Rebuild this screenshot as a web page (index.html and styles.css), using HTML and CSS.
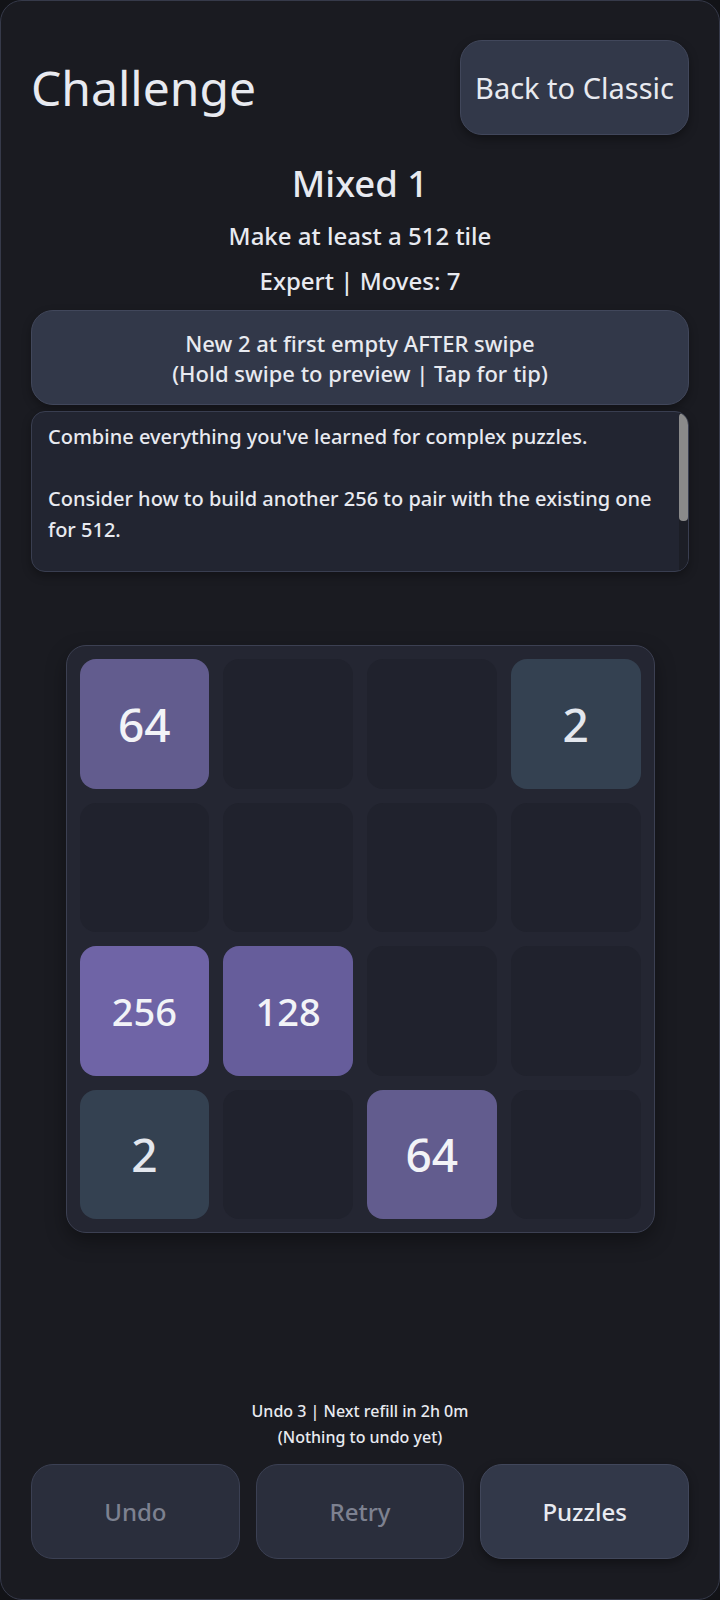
FILE: index.html
```html
<!DOCTYPE html>
<html lang="en">
<head>
    <meta charset="UTF-8">
    <meta name="viewport" content="width=device-width, initial-scale=1.0">
    <title>Challenge</title>
    <link rel="stylesheet" href="styles.css">
</head>
<body>

    <div class="app">
        <!-- Header -->
        <header class="top-bar">
            <h1>Challenge</h1>
            <button class="btn btn-back">Back to Classic</button>
        </header>

        <!-- Level info -->
        <section class="level-info">
            <h2>Mixed 1</h2>
            <p class="goal">Make at least a 512 tile</p>
            <p class="meta">Expert | Moves: 7</p>
        </section>

        <button class="rule-box">New 2 at first empty AFTER swipe<br>(Hold swipe to preview | Tap for tip)</button>

        <div class="notes-wrap">
            <div class="notes">
                <div class="notes-text">Combine everything you've learned for complex puzzles.

Consider how to build another 256 to pair with the existing one for 512.</div>
            </div>
            <div class="scrollbar"><div class="scroll-thumb"></div></div>
        </div>

        <!-- Board -->
        <div class="board">
            <div class="tile t64">64</div>
            <div class="tile"></div>
            <div class="tile"></div>
            <div class="tile t2">2</div>

            <div class="tile"></div>
            <div class="tile"></div>
            <div class="tile"></div>
            <div class="tile"></div>

            <div class="tile t256 small">256</div>
            <div class="tile t128 small">128</div>
            <div class="tile"></div>
            <div class="tile"></div>

            <div class="tile t2">2</div>
            <div class="tile"></div>
            <div class="tile t64">64</div>
            <div class="tile"></div>
        </div>

        <div class="spacer"></div>

        <!-- Footer -->
        <div class="undo-status">
            <p>Undo 3 | Next refill in 2h 0m</p>
            <p>(Nothing to undo yet)</p>
        </div>

        <div class="actions">
            <button class="btn btn-action" disabled>Undo</button>
            <button class="btn btn-action" disabled>Retry</button>
            <button class="btn btn-action btn-primary">Puzzles</button>
        </div>
    </div>

</body>
</html>
```

FILE: styles.css
```css
:root {
    --page: #121317;
    --card: #1a1b21;
    --card-border: #363a4a;
    --panel: #323849;
    --panel-border: #41475b;
    --panel-dark: #222531;
    --text: #e8eaf0;
    --muted: #7d8190;
    --empty: #20222d;
}

* {
    margin: 0;
    padding: 0;
    box-sizing: border-box;
}

body {
    background: var(--page);
    font-family: "Noto Sans", "Open Sans", sans-serif;
    color: var(--text);
}

.app {
    width: 720px;
    height: 1600px;
    background: var(--card);
    border: 1px solid var(--card-border);
    border-radius: 22px;
    padding: 39px 30px 40px;
    display: flex;
    flex-direction: column;
}

.top-bar {
    display: flex;
    justify-content: space-between;
    align-items: center;
}

.top-bar h1 {
    font-size: 48px;
    font-weight: 400;
}

.btn {
    font-family: inherit;
    color: var(--text);
    border-radius: 22px;
    cursor: pointer;
}

.btn-back {
    width: 229px;
    height: 95px;
    font-size: 29px;
    background: var(--panel);
    border: 1px solid var(--panel-border);
    box-shadow: 0 4px 10px rgba(0, 0, 0, 0.35);
}

.level-info {
    text-align: center;
    margin-top: 27px;
}

.level-info h2 {
    font-size: 36.5px;
    font-weight: 500;
    line-height: 42px;
}

.level-info p {
    font-size: 24px;
    font-weight: 500;
    line-height: 30px;
}

.goal {
    margin-top: 17px;
}

.meta {
    margin-top: 15px;
}

.rule-box {
    margin-top: 14px;
    height: 95px;
    font-family: inherit;
    font-size: 22px;
    font-weight: 500;
    line-height: 30px;
    color: var(--text);
    background: var(--panel);
    border: 1px solid var(--panel-border);
    border-radius: 22px;
    box-shadow: 0 4px 10px rgba(0, 0, 0, 0.3);
}

/* notes panel with a thin scroll indicator on the right */
.notes-wrap {
    position: relative;
    margin-top: 6px;
    height: 161px;
    background: var(--panel-dark);
    border: 1px solid #393e50;
    border-radius: 14px;
    box-shadow: 0 4px 10px rgba(0, 0, 0, 0.3);
    overflow: hidden;
}

.notes {
    height: 100%;
    overflow: hidden;
}

.notes-text {
    white-space: pre-line;
    font-size: 20px;
    font-weight: 500;
    line-height: 31px;
    padding: 9px 24px 0 16px;
}

.scrollbar {
    position: absolute;
    top: 0;
    right: 0;
    bottom: 0;
    width: 9px;
    background: #1c1e26;
}

.scroll-thumb {
    height: 108px;
    margin-top: 1px;
    background: #8a8a8a;
    border-radius: 4px;
}

.board {
    margin: 73px auto 0;
    width: 589px;
    height: 588px;
    padding: 13px;
    display: grid;
    grid-template-columns: repeat(4, 1fr);
    grid-template-rows: repeat(4, 1fr);
    gap: 14px;
    background: #242632;
    border: 1px solid #3c4052;
    border-radius: 20px;
    box-shadow: 0 8px 20px rgba(0, 0, 0, 0.35);
}

.tile {
    background: var(--empty);
    border-radius: 16px;
    display: flex;
    justify-content: center;
    align-items: center;
    font-size: 46px;
    font-weight: 500;
    color: #f2f3f7;
}

.tile.small {
    font-size: 38px;
}

.t2 {
    background: #344151;
    color: #e3e7ee;
}

.t64 {
    background: #625c8e;
}

.t128 {
    background: #665d9b;
}

.t256 {
    background: #6f64a6;
}

.spacer {
    flex: 1;
}

.undo-status {
    text-align: center;
    font-size: 16px;
    font-weight: 500;
    line-height: 26px;
}

.actions {
    margin-top: 14px;
    display: grid;
    grid-template-columns: repeat(3, 1fr);
    gap: 16px;
}

.btn-action {
    height: 95px;
    font-size: 24px;
    font-weight: 500;
    background: #2a2e3c;
    border: 1px solid #3b4053;
}

.btn-action:disabled {
    color: var(--muted);
    cursor: default;
}

.btn-primary {
    background: var(--panel);
    border-color: var(--panel-border);
    box-shadow: 0 4px 10px rgba(0, 0, 0, 0.35);
}
```
